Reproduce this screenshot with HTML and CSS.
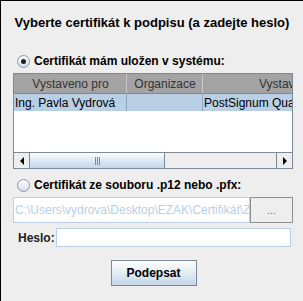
FILE: index.html
```html
<!DOCTYPE html>
<html lang="cs">
<head>
  <meta charset="UTF-8">
  <title>Podpis</title>
  <link rel="stylesheet" href="styles.css">
</head>
<body>
  <div class="dialog">
    <div class="title">Vyberte certifikát k podpisu (a zadejte heslo)</div>

    <label class="radio-row first">
      <span class="radio checked"></span>
      <span>Certifikát mám uložen v systému:</span>
    </label>

    <div class="table">
      <div class="table-view">
        <div class="row head">
          <div class="cell c1">Vystaveno pro</div>
          <div class="cell c2">Organizace</div>
          <div class="cell c3">Vystavitel</div>
        </div>
        <div class="row selected">
          <div class="cell c1">Ing. Pavla Vydrová</div>
          <div class="cell c2"></div>
          <div class="cell c3">PostSignum Qualified CA 2</div>
        </div>
      </div>
      <div class="hscroll">
        <div class="arrow left"><span></span></div>
        <div class="track">
          <div class="thumb"><span class="grip"></span></div>
        </div>
        <div class="arrow right"><span></span></div>
      </div>
    </div>

    <label class="radio-row second">
      <span class="radio"></span>
      <span>Certifikát ze souboru .p12 nebo .pfx:</span>
    </label>

    <div class="file-row">
      <div class="field disabled"><span>C:\Users\vydrova\Desktop\EZAK\Certifikát\Z</span></div>
      <div class="browse">...</div>
    </div>

    <div class="pass-row">
      <span class="pass-label">Heslo:</span>
      <div class="field pass"></div>
    </div>

    <div class="actions">
      <div class="button">Podepsat</div>
    </div>
  </div>
</body>
</html>
```

FILE: styles.css
```css
/* Page */
body {
  margin: 0;
  background: #eeeeee;
  font-family: "Liberation Sans", Arial, sans-serif;
  font-size: 12px;
  color: #000;
}

/* Dialog frame */
.dialog {
  width: 302px;
  height: 300px;
  border-left: 1px solid #000;
  border-top: 1px solid #000;
  background: #eeeeee;
  display: flex;
  flex-direction: column;
}

.title {
  font-weight: bold;
  font-size: 13px;
  text-align: center;
  margin-top: 14px;
  height: 16px;
  line-height: 16px;
}

/* Radio rows */
.radio-row {
  display: flex;
  align-items: center;
  gap: 4px;
  font-weight: bold;
  font-size: 12px;
  padding-left: 16px;
  height: 16px;
}
.radio-row.first {
  margin-top: 22px;
}
.radio-row.second {
  margin-top: 8px;
}

.radio {
  width: 11px;
  height: 11px;
  border-radius: 50%;
  border: 1px solid #8a99a8;
  background: linear-gradient(#ffffff, #d4dde8);
  display: flex;
  align-items: center;
  justify-content: center;
}
.radio.checked::after {
  content: "";
  width: 5px;
  height: 5px;
  border-radius: 50%;
  background: #222;
}

/* Certificate table */
.table {
  margin: 4px 0 0 12px;
  width: 278px;
  height: 94px;
  border: 1px solid #7a8a99;
  background: #fff;
  display: flex;
  flex-direction: column;
  overflow: hidden;
}
.table-view {
  flex: 1;
  overflow: hidden;
}
.row {
  display: flex;
  width: 360px;
}
.row.head {
  height: 20px;
  background: #a3a3a3;
  color: #333;
}
.row.head .cell {
  justify-content: center;
  border-right: 1px solid #c8c8c8;
  border-bottom: 1px solid #7a8a99;
}
.row.selected {
  height: 17px;
  background: #b8cfe5;
}
.row.selected .cell {
  border-right: 1px solid #8fa6bd;
}
.cell {
  display: flex;
  align-items: center;
  padding-left: 1px;
  white-space: nowrap;
  overflow: hidden;
  font-size: 12px;
  box-sizing: border-box;
}
.c1 { width: 113px; }
.c2 { width: 76px; }
.c3 { width: 163px; }

/* Horizontal scrollbar */
.hscroll {
  height: 15px;
  display: flex;
  border-top: 1px solid #7a8a99;
  background: #eeeeee;
}
.arrow {
  width: 15px;
  display: flex;
  align-items: center;
  justify-content: center;
  background: #eeeeee;
}
.arrow.left { border-right: 1px solid #7a8a99; }
.arrow.right { border-left: 1px solid #7a8a99; }
.arrow span {
  width: 0;
  height: 0;
  border-top: 4px solid transparent;
  border-bottom: 4px solid transparent;
}
.arrow.left span { border-right: 4px solid #000; }
.arrow.right span { border-left: 4px solid #000; }
.track {
  flex: 1;
  display: flex;
}
.thumb {
  width: 134px;
  border-right: 1px solid #7a8a99;
  background: linear-gradient(#ffffff, #dde8f3 50%, #c4d6e8);
  display: flex;
  align-items: center;
  justify-content: center;
}
.grip {
  width: 5px;
  height: 8px;
  background: repeating-linear-gradient(90deg, #7a8a99 0 1px, transparent 1px 2px);
}

/* File and password fields */
.file-row {
  display: flex;
  margin: 4px 0 0 12px;
  height: 26px;
}
.field {
  border: 1px solid #b8cfe5;
  background: #fff;
  box-sizing: border-box;
  white-space: nowrap;
  overflow: hidden;
  font-size: 12px;
  display: flex;
  align-items: center;
}
.field.disabled {
  width: 237px;
  color: #b8cfe5;
  padding-left: 1px;
}
.browse {
  width: 43px;
  border: 1px solid #8e8f8f;
  box-sizing: border-box;
  background: #eeeeee;
  color: #777;
  font-size: 11px;
  display: flex;
  align-items: center;
  justify-content: center;
}

.pass-row {
  display: flex;
  align-items: center;
  margin: 5px 0 0 17px;
  height: 19px;
}
.pass-label {
  font-weight: bold;
  font-size: 12px;
  color: #222;
}
.field.pass {
  width: 235px;
  height: 19px;
  margin-left: 1px;
}

/* Submit button */
.actions {
  display: flex;
  justify-content: center;
  margin-top: 13px;
}
.button {
  width: 86px;
  height: 26px;
  box-sizing: border-box;
  border: 1px solid #7a8a99;
  background: linear-gradient(#ffffff, #dde8f3 60%, #c4d6e8);
  font-weight: bold;
  font-size: 12px;
  display: flex;
  align-items: center;
  justify-content: center;
  margin-left: 3px;
}
```
